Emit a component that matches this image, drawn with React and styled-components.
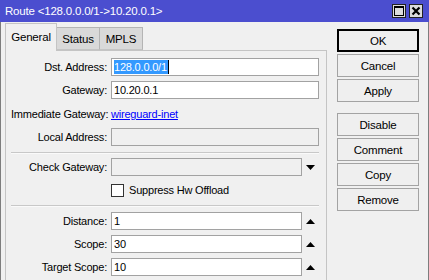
import React from 'react';
import styled, { createGlobalStyle } from 'styled-components';

const Global = createGlobalStyle`
  html, body { margin: 0; padding: 0; background: #f0f0f0; }
  body {
    font-family: "Liberation Sans", Arial, sans-serif;
    font-size: 11px;
    letter-spacing: -0.2px;
    color: #000;
  }
  * { box-sizing: border-box; }
`;

const Window = styled.div`
  width: 429px;
  height: 280px;
  overflow: hidden;
  background: #f0f0f0;
  display: flex;
  flex-direction: column;
`;

const TitleBar = styled.div`
  height: 22px;
  flex: none;
  background: #4b4ecf;
  color: #fff;
  display: flex;
  align-items: center;
  justify-content: space-between;
  padding: 0 5px 0 5px;
  font-size: 11.5px;
`;

const TitleButtons = styled.div`
  display: flex;
  gap: 3px;
  margin-right: 1px;
`;

const TitleButton = styled.div`
  width: 14px;
  height: 14px;
  background: #dcdcdc;
  border: 1px solid #222;
  display: flex;
  align-items: center;
  justify-content: center;
`;

const Body = styled.div`
  flex: 1;
  display: flex;
  border-left: 1px solid #7d7d7d;
  border-right: 1px solid #7d7d7d;
  min-height: 0;
`;

const LeftCol = styled.div`
  width: 322px;
  margin-left: 4px;
  padding-top: 1px;
  display: flex;
  flex-direction: column;
`;

const Tabs = styled.div`
  height: 27px;
  display: flex;
  align-items: flex-end;
  position: relative;
  z-index: 1;
`;

const Tab = styled.div`
  height: ${p => (p.$active ? '28px' : '23px')};
  margin-bottom: ${p => (p.$active ? '-1px' : '0')};
  width: ${p => p.$w}px;
  background: ${p => (p.$active ? '#f0f0f0' : '#d9d9d9')};
  border: 1px solid ${p => (p.$active ? '#c4c4c4' : '#b4b4b4')};
  border-bottom: ${p => (p.$active ? 'none' : '1px solid #c4c4c4')};
  border-left-width: ${p => (p.$first ? '1px' : '0')};
  display: flex;
  align-items: center;
  justify-content: center;
  padding-top: ${p => (p.$active ? '0' : '1px')};
  font-size: 11.5px;
  padding-bottom: ${p => (p.$active ? '2px' : '0')};
`;

const Panel = styled.div`
  flex: 1;
  border: 1px solid #c4c4c4;
  border-bottom: none;
  padding: 7px 7px 0 5px;
`;

const Row = styled.div`
  display: flex;
  align-items: center;
  height: 18px;
  margin-bottom: ${p => p.$mb ?? 5}px;
`;

const Label = styled.div`
  width: 100px;
  flex: none;
  padding-right: 4px;
  text-align: right;
  white-space: nowrap;
`;

const Input = styled.div`
  flex: 1;
  height: 18px;
  border: 1px solid #a2a2a2;
  background: ${p => (p.$disabled ? '#f0f0f0' : '#fff')};
  padding-left: 2px;
  display: flex;
  align-items: center;
  white-space: nowrap;
`;

const Selected = styled.span`
  background: #3399ff;
  color: #fff;
  line-height: 14px;
  padding-right: 1px;
`;

const Caret = styled.span`
  width: 1px;
  height: 14px;
  background: #000;
`;

const Link = styled.a`
  color: #0000ff;
  text-decoration: underline;
  cursor: pointer;
`;

const IconCell = styled.div`
  width: 17px;
  flex: none;
  display: flex;
  align-items: center;
  justify-content: center;
`;

const Separator = styled.div`
  border-top: 1px solid #c8c8c8;
  border-bottom: 1px solid #fafafa;
  margin-top: ${p => p.$mt}px;
  margin-bottom: ${p => p.$mb}px;
`;

const CheckRow = styled.div`
  display: flex;
  align-items: center;
  height: 18px;
  padding-left: 100px;
  gap: 5px;
`;

const Box = styled.div`
  width: 13px;
  height: 13px;
  border: 1px solid #333;
  background: #fff;
`;

const RightCol = styled.div`
  width: 82px;
  margin-left: 10px;
  padding-top: 7px;
  display: flex;
  flex-direction: column;
  gap: 2px;
`;

const Button = styled.div`
  height: 23px;
  background: #efefef;
  border: ${p => (p.$default ? '2px solid #000' : '1px solid #a3a3a3')};
  display: flex;
  align-items: center;
  justify-content: center;
  margin-top: ${p => p.$mt ?? 0}px;
  font-size: 11.5px;
`;

const Tri = ({ up }) => (
  <svg width="9" height="5" viewBox="0 0 9 5">
    {up ? <polygon points="0,5 9,5 4.5,0" fill="#000" /> : <polygon points="0,0 9,0 4.5,5" fill="#000" />}
  </svg>
);

export default function App() {
  return (
    <>
      <Global />
      <Window>
        <TitleBar>
          <span>Route &lt;128.0.0.0/1-&gt;10.20.0.1&gt;</span>
          <TitleButtons>
            <TitleButton>
              <svg width="10" height="10" viewBox="0 0 10 10">
                <rect x="0.5" y="0.5" width="9" height="9" fill="none" stroke="#000" />
                <rect x="0" y="0" width="10" height="2" fill="#000" />
              </svg>
            </TitleButton>
            <TitleButton>
              <svg width="10" height="10" viewBox="0 0 10 10">
                <path d="M1.5 1.5 L8.5 8.5 M8.5 1.5 L1.5 8.5" stroke="#000" strokeWidth="2.2" />
              </svg>
            </TitleButton>
          </TitleButtons>
        </TitleBar>
        <Body>
          <LeftCol>
            <Tabs>
              <Tab $active $first $w={52}>General</Tab>
              <Tab $w={43}>Status</Tab>
              <Tab $w={43}>MPLS</Tab>
            </Tabs>
            <Panel>
              <Row>
                <Label>Dst. Address:</Label>
                <Input><Selected>128.0.0.0/1</Selected><Caret /></Input>
              </Row>
              <Row $mb={6}>
                <Label>Gateway:</Label>
                <Input>10.20.0.1</Input>
              </Row>
              <Row>
                <Label>Immediate Gateway:</Label>
                <Link>wireguard-inet</Link>
              </Row>
              <Row $mb={0}>
                <Label>Local Address:</Label>
                <Input $disabled />
              </Row>
              <Separator $mt={6} $mb={4} />
              <Row>
                <Label>Check Gateway:</Label>
                <Input $disabled />
                <IconCell><Tri /></IconCell>
              </Row>
              <CheckRow>
                <Box />
                <span>Suppress Hw Offload</span>
              </CheckRow>
              <Separator $mt={6} $mb={5} />
              <Row>
                <Label>Distance:</Label>
                <Input>1</Input>
                <IconCell><Tri up /></IconCell>
              </Row>
              <Row>
                <Label>Scope:</Label>
                <Input>30</Input>
                <IconCell><Tri up /></IconCell>
              </Row>
              <Row>
                <Label>Target Scope:</Label>
                <Input>10</Input>
                <IconCell><Tri up /></IconCell>
              </Row>
            </Panel>
          </LeftCol>
          <RightCol>
            <Button $default>OK</Button>
            <Button>Cancel</Button>
            <Button>Apply</Button>
            <Button $mt={9}>Disable</Button>
            <Button>Comment</Button>
            <Button>Copy</Button>
            <Button>Remove</Button>
          </RightCol>
        </Body>
      </Window>
    </>
  );
}
